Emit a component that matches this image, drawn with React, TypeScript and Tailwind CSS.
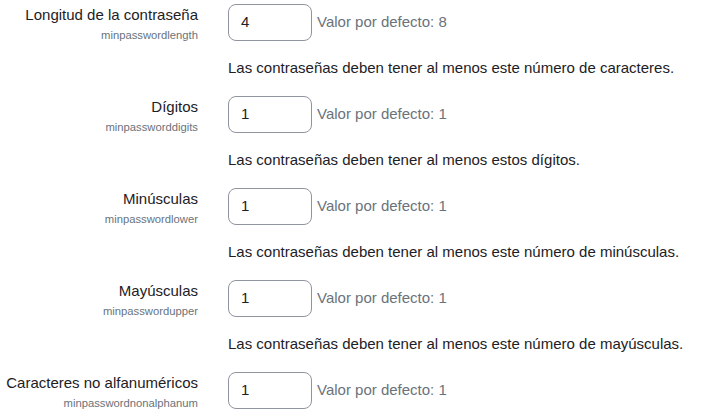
import React from "react";

type Row = { label: string; short: string; value: string; def: string; desc: string };

const rows: Row[] = [
  {
    label: "Longitud de la contraseña",
    short: "minpasswordlength",
    value: "4",
    def: "8",
    desc: "Las contraseñas deben tener al menos este número de caracteres.",
  },
  {
    label: "Dígitos",
    short: "minpassworddigits",
    value: "1",
    def: "1",
    desc: "Las contraseñas deben tener al menos estos dígitos.",
  },
  {
    label: "Minúsculas",
    short: "minpasswordlower",
    value: "1",
    def: "1",
    desc: "Las contraseñas deben tener al menos este número de minúsculas.",
  },
  {
    label: "Mayúsculas",
    short: "minpasswordupper",
    value: "1",
    def: "1",
    desc: "Las contraseñas deben tener al menos este número de mayúsculas.",
  },
  {
    label: "Caracteres no alfanuméricos",
    short: "minpasswordnonalphanum",
    value: "1",
    def: "1",
    desc: "Las contraseñas deben tener al menos este número de caracteres no alfanuméricos.",
  },
];

export default function App() {
  return (
    <div
      className="w-[709px] h-[416px] overflow-hidden bg-white pt-[4px] text-[15px] leading-[22.5px] text-[#1d2125]"
      style={{ fontFamily: '"Liberation Sans", Arial, sans-serif' }}
    >
      {rows.map((r) => (
        <div key={r.short} className="flex gap-[30px] mb-[17px]">
          <div className="w-[198px] shrink-0 text-right">
            <div className="whitespace-nowrap">{r.label}</div>
            <div className="text-[11.25px] leading-[16.875px] text-[#6a737b] whitespace-nowrap">{r.short}</div>
          </div>
          <div className="flex-1 min-w-0">
            <div className="flex items-center">
              <div className="w-[84px] h-[36.5px] border border-[#8f959e] rounded-lg px-3 flex items-center text-[#1d2125]">
                {r.value}
              </div>
              <span className="ml-[5px] text-[#6a737b]">Valor por defecto: {r.def}</span>
            </div>
            <div className="mt-4 whitespace-nowrap">{r.desc}</div>
          </div>
        </div>
      ))}
    </div>
  );
}
